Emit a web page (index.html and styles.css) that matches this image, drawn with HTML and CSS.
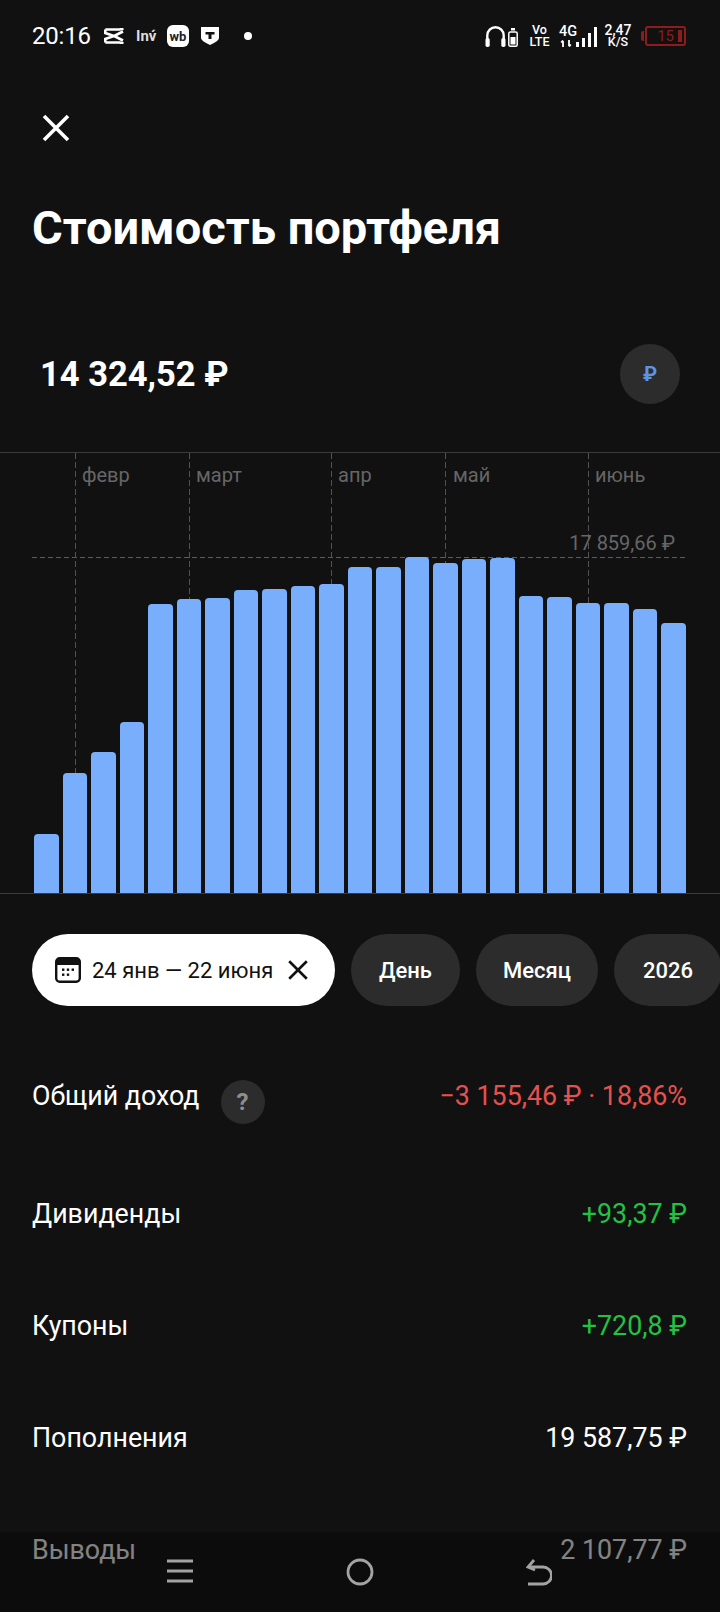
FILE: index.html
```html
<!DOCTYPE html>
<html lang="ru">
<head>
<meta charset="utf-8">
<title>Стоимость портфеля</title>
<link rel="stylesheet" href="styles.css">
</head>
<body>
<div class="screen">
  <header class="status">
    <div class="status-left">
      <span class="time">20:16</span>
      <svg class="ic-capcut" viewBox="0 0 20 16"><path d="M1.300 1.500H15.500L19.500.8M1.300 14.500H15.500L19.500 15.200" fill="none" stroke="#fff" stroke-width="2.600"/><path d="M1.300 1.500V5L10 8 1.300 11V14.500M19 3.500 10 8 19 12.500" fill="none" stroke="#fff" stroke-width="2.600"/></svg>
      <span class="inv">Inv́</span>
      <span class="wb">wb</span>
      <svg class="ic-shield" viewBox="0 0 18 18"><path d="M0 0h18v11q0 3-9 7q-9-4-9-7z" fill="#fff"/><path d="M4.500 5h9v2.500h-3V12h-3V7.500h-3z" fill="#111"/></svg>
      <span class="dot"></span>
    </div>
    <div class="status-right">
      <svg class="ic-phones" viewBox="0 0 21 22"><path d="M2.300 17V10.500a8.200 8.200 0 0 1 16.400 0V17" fill="none" stroke="#fff" stroke-width="2.400"/><rect x="0.500" y="13" width="4.200" height="9" rx="1.800" fill="#fff"/><rect x="16.300" y="13" width="4.200" height="9" rx="1.800" fill="#fff"/></svg>
      <svg class="ic-minibat" viewBox="0 0 10 19"><rect x="3" y="0" width="4" height="2.500" fill="#fff"/><rect x="0.800" y="4" width="8.400" height="14.200" rx="1.500" fill="none" stroke="#fff" stroke-width="1.500"/><rect x="2.500" y="9" width="5" height="7.500" fill="#fff"/></svg>
      <span class="stack stack-lte"><span>Vo</span><span>LTE</span></span>
      <span class="stack stack-net"><span>4G</span><svg class="ic-arrows" viewBox="0 0 12 7"><path d="M3 7V1M1.200 2.500 3 .5M9 0v6M10.800 4.500 9 6.500" fill="none" stroke="#fff" stroke-width="1.800"/></svg></span>
      <span class="signal"><i class="s1"></i><i class="s2"></i><i class="s3"></i><i class="s4"></i></span>
      <span class="stack stack-speed"><span>2,47</span><span class="speed-unit">K/S</span></span>
      <span class="battery"><span class="bat-cap"></span><span class="bat-body"><span class="bat-num">15</span><span class="bat-fill"></span></span></span>
    </div>
  </header>

  <button class="close" aria-label="Закрыть">
    <svg viewBox="0 0 28 28"><path d="M2 2 26 26M26 2 2 26" stroke="#fff" stroke-width="3.600" fill="none"/></svg>
  </button>

  <h1 class="title">Стоимость портфеля</h1>

  <div class="balance">
    <span class="balance-value">14 324,52 ₽</span>
    <span class="currency">₽</span>
  </div>

  <section class="chart">
    <div class="vline" style="left:75px"></div>
    <div class="vline" style="left:189px"></div>
    <div class="vline" style="left:331px"></div>
    <div class="vline" style="left:445px"></div>
    <div class="vline" style="left:588px"></div>
    <span class="month" style="left:82px">февр</span>
    <span class="month" style="left:196px">март</span>
    <span class="month" style="left:338px">апр</span>
    <span class="month" style="left:453px">май</span>
    <span class="month" style="left:595px">июнь</span>
    <div class="maxline"></div>
    <span class="maxlabel">17 859,66 ₽</span>
    <div class="bars">
      <i style="height:59px"></i><i style="height:120px"></i><i style="height:141px"></i><i style="height:171px"></i>
      <i style="height:289px"></i><i style="height:294px"></i><i style="height:295px"></i><i style="height:303px"></i>
      <i style="height:304px"></i><i style="height:307px"></i><i style="height:309px"></i><i style="height:326px"></i>
      <i style="height:326px"></i><i style="height:336px"></i><i style="height:330px"></i><i style="height:334px"></i>
      <i style="height:335px"></i><i style="height:297px"></i><i style="height:296px"></i><i style="height:290px"></i>
      <i style="height:290px"></i><i style="height:284px"></i><i style="height:270px"></i>
    </div>
  </section>

  <div class="chips">
    <div class="chip chip-active">
      <svg class="ic-cal" viewBox="0 0 26 26"><rect x="1.200" y="1.200" width="23.600" height="23.600" rx="3.500" fill="none" stroke="#111" stroke-width="2.400"/><path d="M1.500 4.500a3 3 0 0 1 3-3h17a3 3 0 0 1 3 3V8h-23z" fill="#111"/><g fill="#111"><rect x="7" y="11.500" width="2.400" height="2.400"/><rect x="11.800" y="11.500" width="2.400" height="2.400"/><rect x="16.600" y="11.500" width="2.400" height="2.400"/><rect x="7" y="16.500" width="2.400" height="2.400"/><rect x="11.800" y="16.500" width="2.400" height="2.400"/></g></svg>
      <span>24 янв — 22 июня</span>
      <svg class="ic-x" viewBox="0 0 20 20"><path d="M2 2 18 18M18 2 2 18" stroke="#111" stroke-width="2.400" fill="none"/></svg>
    </div>
    <div class="chip chip-day">День</div>
    <div class="chip chip-month">Месяц</div>
    <div class="chip chip-year">2026</div>
  </div>

  <div class="rows">
    <div class="row row-first">
      <span class="row-label">Общий доход</span>
      <span class="help">?</span>
      <span class="row-value red">−3 155,46 ₽ · 18,86%</span>
    </div>
    <div class="row"><span class="row-label">Дивиденды</span><span class="row-value green">+93,37 ₽</span></div>
    <div class="row"><span class="row-label">Купоны</span><span class="row-value green">+720,8 ₽</span></div>
    <div class="row"><span class="row-label">Пополнения</span><span class="row-value">19 587,75 ₽</span></div>
    <div class="row"><span class="row-label">Выводы</span><span class="row-value">2 107,77 ₽</span></div>
  </div>

  <nav class="navbar">
    <svg class="nav-menu" viewBox="0 0 26 26"><path d="M0 3h26M0 13h26M0 23h26" stroke="#a3a3a3" stroke-width="3" fill="none"/></svg>
    <svg class="nav-home" viewBox="0 0 28 28"><circle cx="14" cy="14" r="12" stroke="#a3a3a3" stroke-width="2.800" fill="none"/></svg>
    <svg class="nav-back" viewBox="0 0 26 28"><path d="M2 26h15a7.500 7.500 0 0 0 0-17H3" stroke="#a3a3a3" stroke-width="2.800" fill="none"/><path d="M8 2 2 9l7 3" stroke="#a3a3a3" stroke-width="2.800" fill="none"/></svg>
  </nav>
</div>
</body>
</html>
```
FILE: styles.css
```css
* { box-sizing: border-box; }
html, body { margin: 0; padding: 0; background: #111112; }
.screen {
  position: relative;
  width: 720px;
  height: 1612px;
  overflow: hidden;
  background: #111112;
  color: #fff;
  font-family: Roboto, "Liberation Sans", sans-serif;
}

/* status bar */
.status {
  height: 72px;
  display: flex;
  align-items: center;
  justify-content: space-between;
  padding: 0 34px 0 32px;
}
.status-left, .status-right { display: flex; align-items: center; }
.time { font-size: 24px; width: 72px; letter-spacing: -.2px; }
.ic-capcut { width: 20px; height: 16px; margin-right: 12px; }
.inv { width: 31px; font-size: 15px; font-weight: 700; color: #ddd; }
.wb {
  width: 22px; height: 22px; border-radius: 6px; background: #fff; color: #222;
  font-size: 13px; font-weight: 700; display: flex; align-items: center; justify-content: center;
  margin-right: 12px;
}
.ic-shield { width: 18px; height: 18px; margin-right: 25px; }
.dot { width: 8px; height: 8px; border-radius: 50%; background: #fff; }
.ic-phones { width: 21px; height: 22px; margin-right: 2px; }
.ic-minibat { width: 10px; height: 19px; margin-right: 12px; margin-top: 3px; }
.stack {
  display: flex; flex-direction: column; align-items: center;
  font-weight: 500; color: #fff;
}
.stack-lte { width: 20px; font-size: 12.500px; line-height: 12px; margin-right: 10px; }
.stack-net { width: 17px; font-size: 14.500px; line-height: 14px; }
.ic-arrows { width: 12px; height: 7px; margin-top: 1px; margin-left: -4px; }
.signal { display: flex; align-items: flex-end; gap: 2.500px; height: 20px; margin: 2px 7px 0 -1px; }
.signal i { display: block; width: 3.500px; background: #fff; }
.s1 { height: 5px; } .s2 { height: 9px; } .s3 { height: 14px; } .s4 { height: 20px; }
.stack-speed { width: 28px; font-size: 14px; line-height: 12px; margin-right: 9px; }
.speed-unit { font-size: 12.500px; }
.battery { display: flex; align-items: center; width: 45px; }
.bat-cap { width: 3px; height: 10px; background: #8d1c1c; border-radius: 2px 0 0 2px; }
.bat-body {
  flex: 1; height: 20px; border: 2px solid #8d1c1c; border-radius: 3px; margin-left: 1px;
  display: flex; align-items: center; justify-content: flex-end; padding-right: 2px;
}
.bat-num { font-size: 15px; color: #8d1c1c; margin-right: 4px; }
.bat-fill { width: 4px; height: 12px; background: #8d1c1c; }

/* header */
.close {
  display: block; width: 28px; height: 28px; margin: 42px 0 0 42px;
  padding: 0; border: 0; background: none;
}
.close svg { display: block; width: 28px; height: 28px; }
.title {
  margin: 56px 0 0 32px;
  font-size: 47px; line-height: 60px; font-weight: 700;
}
.balance {
  display: flex; align-items: center; justify-content: space-between;
  margin-top: 86px; padding: 0 40px 0 40px; height: 60px;
}
.balance-value { font-size: 34.500px; font-weight: 700; }
.currency {
  width: 60px; height: 60px; border-radius: 50%; background: #2c2c2d; color: #5b93e6;
  display: flex; align-items: center; justify-content: center; font-size: 20px; font-weight: 700;
}

/* chart */
.chart {
  position: relative; height: 442px; margin-top: 48px;
  border-top: 1px solid #3b3b3c; border-bottom: 1px solid #3b3b3c;
}
.vline {
  position: absolute; top: 0; bottom: 0; width: 1px;
  background: repeating-linear-gradient(to bottom, #525253 0 6px, transparent 6px 9px);
}
.month { position: absolute; top: 10px; font-size: 20px; line-height: 24px; color: #666; }
.maxline {
  position: absolute; left: 32px; width: 654px; top: 104px; height: 1px;
  background: repeating-linear-gradient(to right, #5a5a5b 0 5px, transparent 5px 8px);
}
.maxlabel { position: absolute; right: 45px; top: 78px; font-size: 20px; line-height: 24px; color: #666; }
.bars {
  position: absolute; left: 34px; bottom: 0; width: 652px; height: 340px;
  display: flex; align-items: flex-end; justify-content: space-between;
}
.bars i { display: block; width: 24.500px; background: #79aefc; border-radius: 4px 4px 0 0; }

/* chips */
.chips { display: flex; gap: 16px; margin-top: 40px; padding-left: 32px; }
.chip {
  height: 72px; border-radius: 36px; background: #2c2c2d; color: #fff; flex: none;
  display: flex; align-items: center; justify-content: center;
  font-size: 22px; font-weight: 500;
}
.chip-active { width: 303px; background: #fff; color: #111; font-weight: 400; justify-content: flex-start; padding-left: 23px; }
.ic-cal { width: 26px; height: 26px; margin-right: 11px; }
.ic-x { width: 22px; height: 22px; margin-left: 14px; }
.chip-day { width: 109px; }
.chip-month { width: 122px; }
.chip-year { width: 108px; }

/* rows */
.rows { margin-top: 34px; padding: 0 33px 0 32px; }
.row {
  display: flex; align-items: center; height: 112px; font-size: 26.800px;
}
.row-first { height: 112px; margin-bottom: 6px; }
.row-value { margin-left: auto; }
.help {
  width: 44px; height: 44px; border-radius: 50%; background: #2c2c2d; color: #8e8e8e;
  display: flex; align-items: center; justify-content: center;
  font-size: 24px; font-weight: 700; margin: 12px 0 0 21px;
}
.red { color: #e5514f; }
.green { color: #22c244; }

/* navigation bar */
.navbar {
  position: absolute; left: 0; right: 0; bottom: 0; height: 80px;
  background: rgba(8, 8, 8, .5);
}
.navbar svg { position: absolute; }
.nav-menu { left: 167px; top: 26px; width: 26px; height: 26px; }
.nav-home { left: 346px; top: 26px; width: 28px; height: 28px; }
.nav-back { left: 526px; top: 26px; width: 26px; height: 28px; }
```
